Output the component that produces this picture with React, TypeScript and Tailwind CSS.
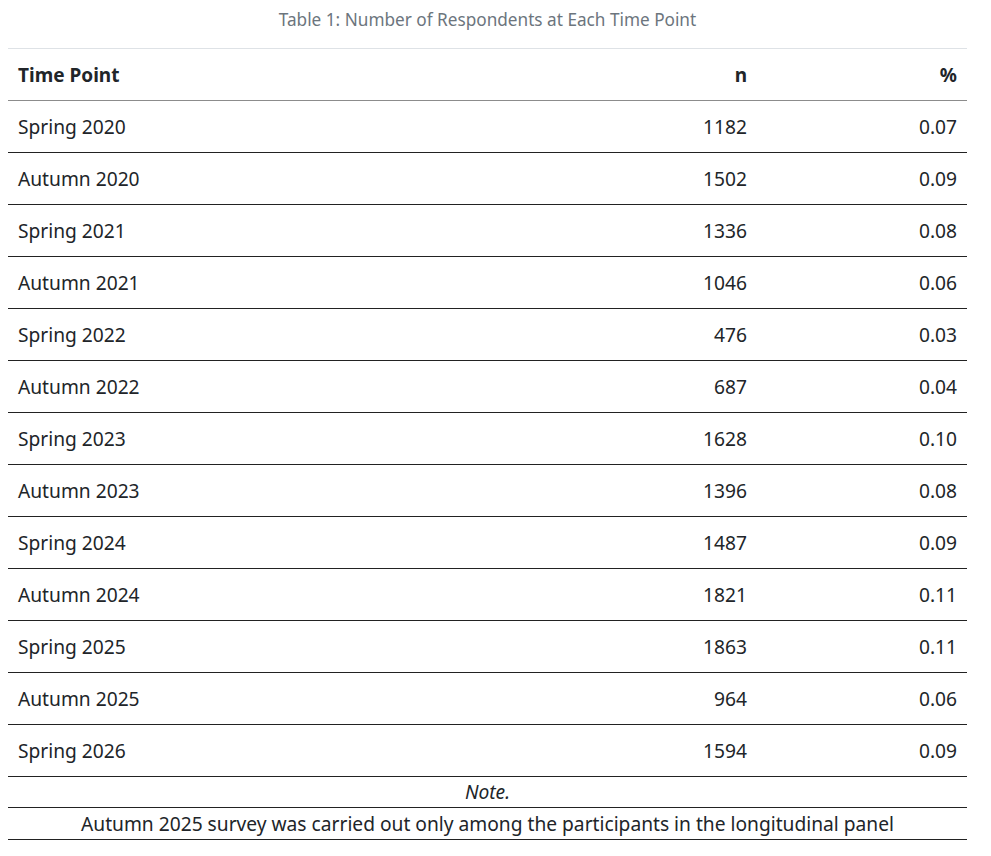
const rows: [string, number, string][] = [
  ["Spring 2020", 1182, "0.07"],
  ["Autumn 2020", 1502, "0.09"],
  ["Spring 2021", 1336, "0.08"],
  ["Autumn 2021", 1046, "0.06"],
  ["Spring 2022", 476, "0.03"],
  ["Autumn 2022", 687, "0.04"],
  ["Spring 2023", 1628, "0.10"],
  ["Autumn 2023", 1396, "0.08"],
  ["Spring 2024", 1487, "0.09"],
  ["Autumn 2024", 1821, "0.11"],
  ["Spring 2025", 1863, "0.11"],
  ["Autumn 2025", 964, "0.06"],
  ["Spring 2026", 1594, "0.09"],
];

export default function App() {
  return (
    <div className="min-h-screen bg-white px-2 pt-[7px] font-['Noto_Sans',sans-serif] text-[#212529]">
      <table className="w-[959px] border-collapse">
        <caption className="h-[41px] text-center text-[17.2px] leading-[26px] text-[#6c757d]">
          Table 1: Number of Respondents at Each Time Point
        </caption>
        <thead>
          <tr className="h-[52px] border-t border-b border-t-[#dee2e6] border-b-[#8c8c8c]">
            <th className="px-[10px] pt-[2px] text-left text-[19px] font-bold">Time Point</th>
            <th className="w-[200px] px-[10px] pt-[2px] text-right text-[19px] font-bold">n</th>
            <th className="w-[210px] px-[10px] pt-[2px] text-right text-[19px] font-bold">%</th>
          </tr>
        </thead>
        <tbody>
          {rows.map(([label, n, pct]) => (
            <tr key={label} className="h-[52px] border-b border-[#222222]">
              <td className="px-[10px] pt-[2px] text-left text-[19.2px]">{label}</td>
              <td className="px-[10px] pt-[2px] text-right text-[19.2px]">{n}</td>
              <td className="px-[10px] pt-[2px] text-right text-[19.2px]">{pct}</td>
            </tr>
          ))}
        </tbody>
        <tfoot>
          <tr className="h-[31px] border-b border-[#222222]">
            <td colSpan={3} className="text-center text-[19.2px] leading-[28px] italic">
              Note.
            </td>
          </tr>
          <tr className="h-[32px] border-b border-[#222222]">
            <td colSpan={3} className="text-center text-[19.2px] leading-[28px]">
              Autumn 2025 survey was carried out only among the participants in the longitudinal panel
            </td>
          </tr>
        </tfoot>
      </table>
    </div>
  );
}
